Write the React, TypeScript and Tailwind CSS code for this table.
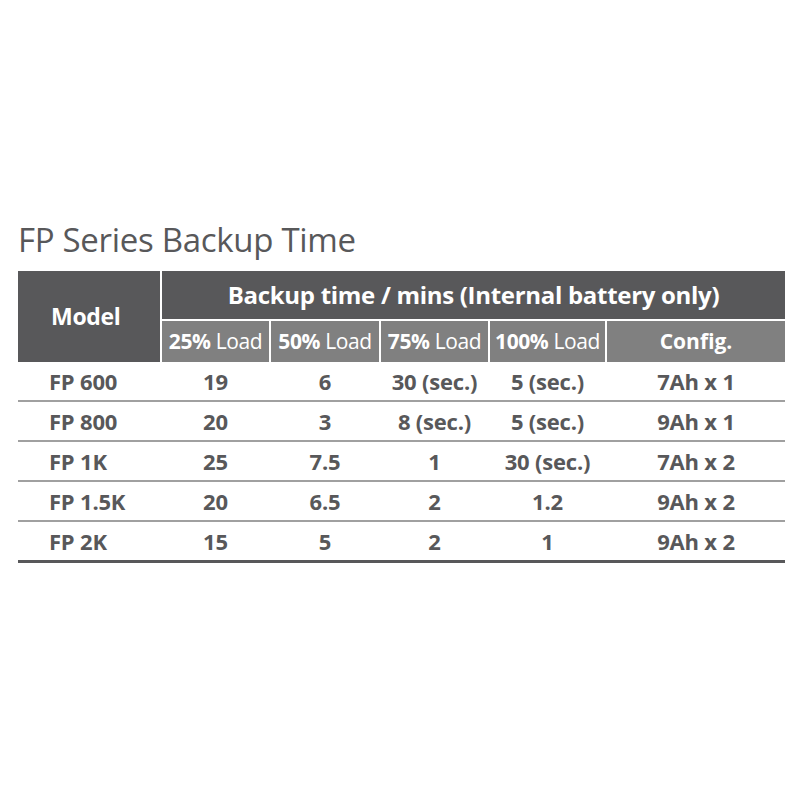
const cols = 'grid grid-cols-[142px_107px_108px_107px_115px_1fr] gap-x-[2px]';

const rows = [
  ['FP 600', '19', '6', '30 (sec.)', '5 (sec.)', '7Ah x 1'],
  ['FP 800', '20', '3', '8 (sec.)', '5 (sec.)', '9Ah x 1'],
  ['FP 1K', '25', '7.5', '1', '30 (sec.)', '7Ah x 2'],
  ['FP 1.5K', '20', '6.5', '2', '1.2', '9Ah x 2'],
  ['FP 2K', '15', '5', '2', '1', '9Ah x 2'],
];

const loads = ['25%', '50%', '75%', '100%'];

export default function App() {
  return (
    <div
      className="w-[800px] h-[800px] bg-white pt-[219px] px-[18px]"
      style={{ fontFamily: '"Open Sans", "Liberation Sans", sans-serif' }}
    >
      <h1 className="text-[33px] leading-[42px] text-[#58585a] tracking-[-0.3px]">FP Series Backup Time</h1>

      <div className="mt-[10px] w-[767px]">
        {/* Header */}
        <div className={`${cols} grid-rows-[48px_41px] gap-y-[2px]`}>
          <div className="row-span-2 bg-[#58585a] flex items-center pl-[33px] text-white font-bold text-[23px] tracking-[-0.3px]">
            Model
          </div>
          <div className="col-span-5 bg-[#58585a] flex items-center justify-center text-white font-bold text-[24px] tracking-[-0.3px]">
            Backup time / mins (Internal battery only)
          </div>
          {loads.map((l) => (
            <div key={l} className="bg-[#808080] flex items-center justify-center text-white text-[21px] whitespace-nowrap tracking-[-0.4px]">
              <span className="font-bold">{l}</span>&nbsp;Load
            </div>
          ))}
          <div className="bg-[#808080] flex items-center justify-center text-white font-bold text-[21px]">
            Config.
          </div>
        </div>

        {/* Body */}
        {rows.map((r, i) => (
          <div
            key={r[0]}
            className={`${cols} h-[40px] items-center text-[#58585a] font-bold text-[22px] tracking-[-0.2px] ${
              i === rows.length - 1 ? 'h-[41px] border-b-[3px] border-[#58585a]' : 'border-b-2 border-[#a0a0a0]'
            }`}
          >
            <div className="pl-[31px]">{r[0]}</div>
            {r.slice(1).map((v, j) => (
              <div key={j} className="text-center whitespace-nowrap">
                {v}
              </div>
            ))}
          </div>
        ))}
      </div>
    </div>
  );
}
